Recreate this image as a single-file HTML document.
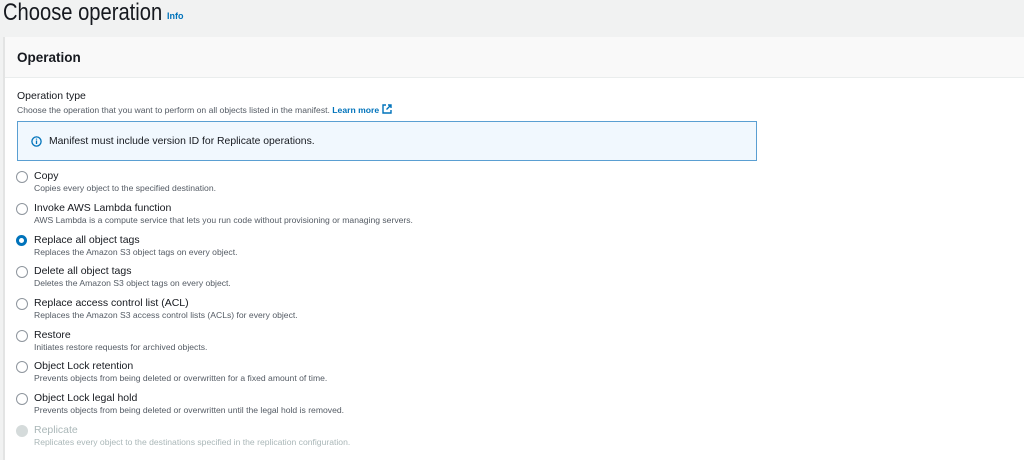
<!DOCTYPE html>
<html><head><style>
body{margin:0;width:1024px;height:460px;overflow:hidden;background:#f1f2f2;font-family:"Liberation Sans",sans-serif;color:#16191f;position:relative}
.t{position:absolute;left:3px;top:-1px;font-size:24px;color:#16191f;transform:scaleX(0.84);transform-origin:0 0;white-space:nowrap}
.info{position:absolute;left:167px;top:11px;font-size:9px;font-weight:bold;color:#0073bb}
.card{position:absolute;left:3px;top:37px;right:0;bottom:0;background:#fff;border-left:2px solid #e3e4e4}
.hd{height:40px;background:#f9f9f9;border-bottom:1px solid #eaeded;font-weight:bold;font-size:13.5px;line-height:41px;padding-left:12px}
.abs{position:absolute}
.alert{position:absolute;left:12px;top:84px;width:738px;height:38px;background:#f1f8fe;border:1px solid #5a9fd2}
.r{position:absolute;left:11px}
.c{position:absolute;left:0;top:0;width:10px;height:10px;border:1px solid #8f969e;border-radius:50%;background:#fff}
.l{position:absolute;left:18px;top:-1px;font-size:10.5px;white-space:nowrap}
.d{position:absolute;left:18px;top:12px;font-size:8.6px;color:#545b64;white-space:nowrap}
</style></head><body>
<div class="t">Choose operation</div><div class="info">Info</div>
<div class="card">
<div class="hd">Operation</div>
<div class="abs" style="left:12px;top:53px;font-size:10.5px">Operation type</div>
<div class="abs" style="left:12px;top:67px;font-size:8.6px;color:#545b64;white-space:nowrap">Choose the operation that you want to perform on all objects listed in the manifest. <b style="color:#0073bb">Learn more</b> <svg width="10" height="10" viewBox="0 0 10 10" style="vertical-align:-1px"><path d="M4 1H1v8h8V6M6 1h3v3M9 1L4.5 5.5" fill="none" stroke="#0073bb" stroke-width="1.4"/></svg></div>
<div class="alert">
<svg class="abs" style="left:13px;top:14px" width="11" height="11" viewBox="0 0 11 11"><circle cx="5.5" cy="5.5" r="4.6" fill="none" stroke="#0073bb" stroke-width="1.3"/><path d="M5.5 4.5v3.5M5.5 2.6v1" stroke="#0073bb" stroke-width="1.3"/></svg>
<div class="abs" style="left:31px;top:14px;font-size:10.4px">Manifest must include version ID for Replicate operations.</div>
</div>
<div class="r" style="top:134px"><div class="c"></div><div class="l">Copy</div><div class="d">Copies every object to the specified destination.</div></div>
<div class="r" style="top:166px"><div class="c"></div><div class="l">Invoke AWS Lambda function</div><div class="d">AWS Lambda is a compute service that lets you run code without provisioning or managing servers.</div></div>
<div class="r" style="top:198px"><div class="c" style="border:3.5px solid #0073bb;width:5px;height:5px"></div><div class="l">Replace all object tags</div><div class="d">Replaces the Amazon S3 object tags on every object.</div></div>
<div class="r" style="top:229px"><div class="c"></div><div class="l">Delete all object tags</div><div class="d">Deletes the Amazon S3 object tags on every object.</div></div>
<div class="r" style="top:261px"><div class="c"></div><div class="l">Replace access control list (ACL)</div><div class="d">Replaces the Amazon S3 access control lists (ACLs) for every object.</div></div>
<div class="r" style="top:293px"><div class="c"></div><div class="l">Restore</div><div class="d">Initiates restore requests for archived objects.</div></div>
<div class="r" style="top:324px"><div class="c"></div><div class="l">Object Lock retention</div><div class="d">Prevents objects from being deleted or overwritten for a fixed amount of time.</div></div>
<div class="r" style="top:356px"><div class="c"></div><div class="l">Object Lock legal hold</div><div class="d">Prevents objects from being deleted or overwritten until the legal hold is removed.</div></div>
<div class="r" style="top:388px"><div class="c" style="background:#d5dbdb;border-color:#d5dbdb"></div><div class="l" style="color:#aab7b8">Replicate</div><div class="d" style="color:#aab7b8">Replicates every object to the destinations specified in the replication configuration.</div></div>
</div>
</body></html>
